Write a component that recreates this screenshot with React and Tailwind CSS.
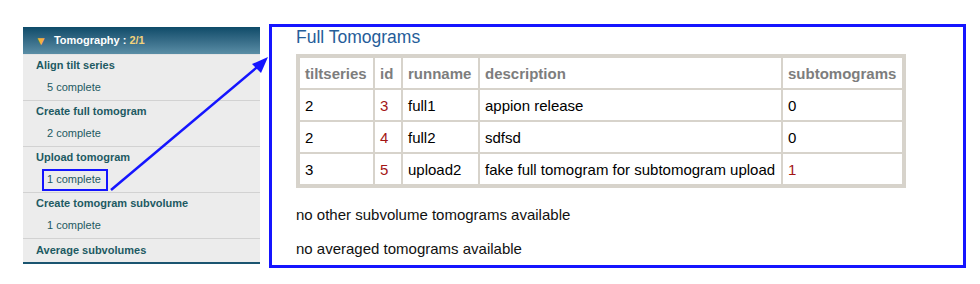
import React from "react";

const font = { fontFamily: '"Liberation Sans", Arial, sans-serif' };

function Section({ title, count, boxed }) {
  return (
    <div className="border-b border-[#d2d2d2]">
      <div className="h-[20px] flex items-center pl-[13px] text-[11px] font-bold text-[#1d5a62] leading-none">
        {title}
      </div>
      {count && (
        <div className="h-[25px] flex items-center pl-[24px] text-[11px] text-[#1d5a62] leading-none">
          {boxed ? (
            <span className="inline-flex items-center h-[22px] -ml-[5px] pl-[3px] pr-[5px] border-2 border-[#1515ff]">
              {count}
            </span>
          ) : (
            count
          )}
        </div>
      )}
    </div>
  );
}

const rows = [
  ["2", "3", "full1", "appion release", "0", false],
  ["2", "4", "full2", "sdfsd", "0", false],
  ["3", "5", "upload2", "fake full tomogram for subtomogram upload", "1", true],
];

export default function App() {
  return (
    <div className="relative w-[980px] h-[284px] bg-white overflow-hidden" style={font}>
      <div className="flex items-start">
        {/* Sidebar */}
        <div className="ml-[23px] mt-[27px] w-[237px] bg-[#ececec]">
          <div className="h-[27px] flex items-center pl-[12px] bg-gradient-to-b from-[#0d4b69] to-[#5a8ea6] text-[11px] font-bold text-white leading-none">
            <span className="text-[#f6b23c] text-[12px] mr-[7px]">▼</span>
            <span>Tomography : </span>
            <span className="text-[#f3d27a] ml-[3px]">2/1</span>
          </div>
          <div className="h-[1px] bg-[#e4e4e4]" />
          <div>
            <Section title="Align tilt series" count="5 complete" />
            <Section title="Create full tomogram" count="2 complete" />
            <Section title="Upload tomogram" count="1 complete" boxed />
            <Section title="Create tomogram subvolume" count="1 complete" />
            <div className="h-[23px] flex items-center pl-[13px] text-[11px] font-bold text-[#1d5a62] leading-none">
              Average subvolumes
            </div>
          </div>
          <div className="h-[2px] bg-[#1b5570]" />
        </div>

        {/* Main box */}
        <div className="ml-[9px] mt-[24px] w-[697px] h-[244px] border-[3px] border-[#1515ff] pl-[24px]">
          <div className="h-[22px] flex items-center text-[17.5px] text-[#255d99] leading-none">
            Full Tomograms
          </div>
          <table className="mt-[5px] border-separate border-spacing-[2px] bg-[#d7d3cb] p-[2px] text-[15px] leading-none">
            <thead>
              <tr className="h-[30px]">
                {[
                  ["tiltseries", "w-[73px]"],
                  ["id", "w-[26px]"],
                  ["runname", "w-[75px]"],
                  ["description", "w-[301px]"],
                  ["subtomograms", "w-[119px]"],
                ].map(([h, w]) => (
                  <th key={h} className={`${w} bg-white text-left font-bold text-[#7d7d7d] px-[5px] whitespace-nowrap`}>
                    {h}
                  </th>
                ))}
              </tr>
            </thead>
            <tbody>
              {rows.map((r) => (
                <tr key={r[1]} className="h-[30px]">
                  <td className="bg-white px-[5px] text-black">{r[0]}</td>
                  <td className="bg-white px-[5px] text-[#a31515]">{r[1]}</td>
                  <td className="bg-white px-[5px] text-black">{r[2]}</td>
                  <td className="bg-white px-[5px] text-black whitespace-nowrap">{r[3]}</td>
                  <td className={`bg-white px-[5px] ${r[5] ? "text-[#a31515]" : "text-black"}`}>{r[4]}</td>
                </tr>
              ))}
            </tbody>
          </table>
          <div className="mt-[19px] text-[15px] leading-none text-[#111]">
            no other subvolume tomograms available
          </div>
          <div className="mt-[19px] text-[15px] leading-none text-[#111]">
            no averaged tomograms available
          </div>
        </div>
      </div>

      {/* Arrow annotation */}
      <svg className="absolute left-0 top-0 pointer-events-none" width="980" height="284">
        <line x1="111" y1="190" x2="262" y2="63" stroke="#1515ff" strokeWidth="2.5" />
        <polygon points="268,57 252,64 261,73" fill="#1515ff" />
      </svg>
    </div>
  );
}
